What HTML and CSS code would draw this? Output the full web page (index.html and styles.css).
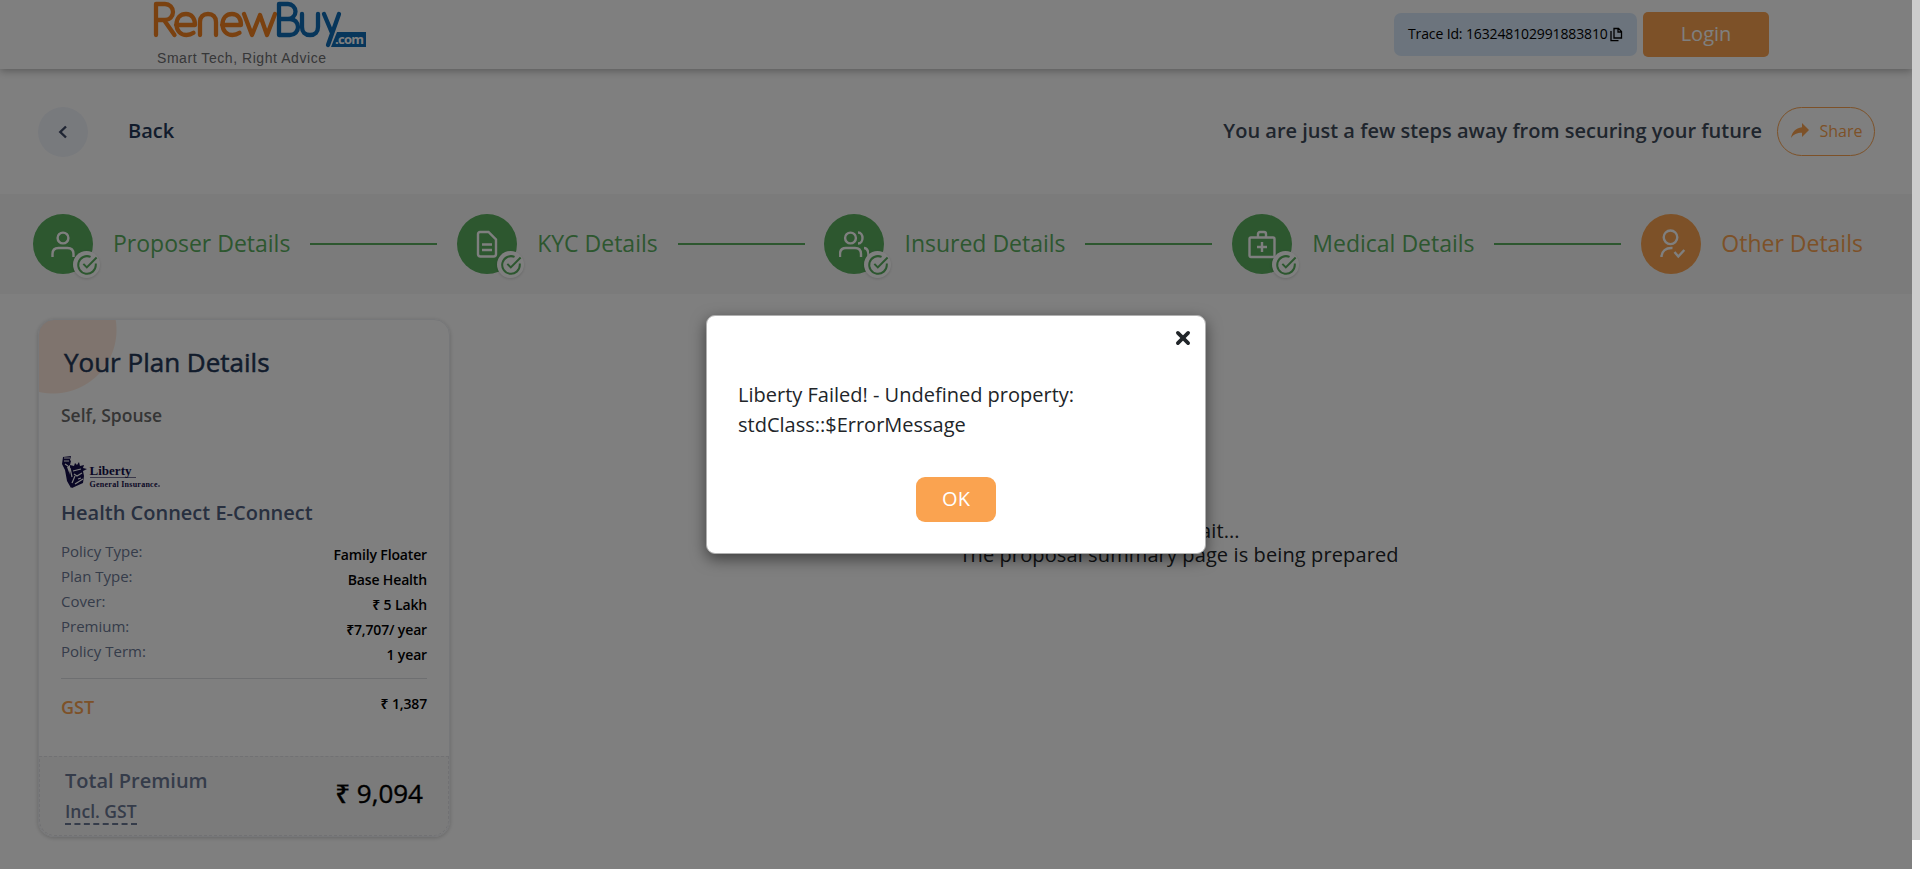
FILE: index.html
```html
<!DOCTYPE html>
<html lang="en">
<head>
<meta charset="utf-8">
<title>RenewBuy</title>
<link rel="stylesheet" href="styles.css">
</head>
<body>
<svg class="defs" aria-hidden="true">
  <symbol id="check" viewBox="0 0 24 24"><path d="M21.6 10.3v1.7A9.6 9.6 0 1 1 15.9 3.2M22.5 3.8 11.8 14.600 8 10.800" fill="none" stroke="currentColor" stroke-width="2.200"/></symbol>
</svg>
<div class="page">
  <header class="topbar">
    <div class="brand">
      <svg class="logo" viewBox="0 0 216 66" role="img" aria-label="RenewBuy.com">
        <g fill="none" stroke-width="4.300" stroke-linecap="round" stroke-linejoin="round">
          <g stroke="#f58220">
            <path d="M3 35V4h9a8 8 0 0 1 0 16H3M11 20l10.500 15"/>
            <path d="M23 25h19c0-7-3.500-11-9-11s-9.500 4-9.500 10.500S28 35 33.500 35c3 0 5-.8 7-2.200"/>
            <path d="M47 35V22c0-5 3-8 8-8s8 3 8 8v13"/>
            <path d="M69 25h19c0-7-3.500-11-9-11s-9.500 4-9.500 10.500S74 35 79.500 35c3 0 5-.8 7-2.200"/>
            <path d="M91 14l8 21 8-20 7 20 8-21"/>
          </g>
          <g stroke="#0f6cb6">
            <path d="M126 4h9a7.500 7.500 0 0 1 0 15h-9V4zM126 19h11a8 8 0 0 1 0 16h-11z"/>
            <path d="M149 14v13c0 5 3 8 8 8s8-3 8-8V14"/>
            <path d="M171 14l8 19M186 14l-11 31"/>
          </g>
        </g>
        <path d="M184 32h29v15h-35z" fill="#0f6cb6"/>
        <text x="182" y="43.500" class="logo-com" textLength="29">.com</text>
        <text x="4" y="63" class="logo-tag" textLength="169">Smart Tech, Right Advice</text>
      </svg>
    </div>
    <div class="account">
      <div class="trace"><span>Trace Id: 163248102991883810</span>
        <svg class="copy" viewBox="0 0 14 15"><path d="M5 1.500h4.500L12.500 4.500v6.500H5zM9 1.500V5h3.500M2 4v9.700h7.500" fill="none" stroke="#000" stroke-width="1.300"/></svg>
      </div>
      <button class="login">Login</button>
    </div>
  </header>
  <div class="subbar">
    <span class="back-btn"><svg viewBox="0 0 10 14"><path d="M8 1.500 2.300 7 8 12.500" fill="none" stroke="#3f4a66" stroke-width="2.400"/></svg></span>
    <span class="back">Back</span>
    <span class="slogan">You are just a few steps away from securing your future</span>
    <button class="share"><svg viewBox="0 0 18 16"><path d="M11 0l7 7-7 7V9.800C6 9.800 2.500 11.200 0 15 .8 9 4.500 5 11 4.200z" fill="currentColor"/></svg>Share</button>
  </div>
  <nav class="steps">
    <div class="step"><span class="dot"><svg viewBox="0 0 30 30"><circle cx="15" cy="9" r="5.400"/><path d="M4.500 28v-3c0-4 2.500-6 6-6h9c3.500 0 6 2 6 6v3"/></svg><i class="tick"><svg><use href="#check"/></svg></i></span><span class="label">Proposer Details</span></div>
    <span class="line"></span>
    <div class="step"><span class="dot"><svg viewBox="0 0 30 30"><path d="M8 3h8.500L24 10.500V25a2.500 2.500 0 0 1-2.500 2.500h-13A2.500 2.500 0 0 1 6 25V5a2 2 0 0 1 2-2zM10 15.500h10M10 21h10"/></svg><i class="tick"><svg><use href="#check"/></svg></i></span><span class="label">KYC Details</span></div>
    <span class="line"></span>
    <div class="step"><span class="dot"><svg viewBox="0 0 30 30"><circle cx="11.500" cy="9" r="5.400"/><path d="M1 28v-3c0-4 2.500-6 6-6h9c3.500 0 6 2 6 6v3M19 3.500c6 0 6 11 0 11M25 19c3 0 4.500 3 4.500 8"/></svg><i class="tick"><svg><use href="#check"/></svg></i></span><span class="label">Insured Details</span></div>
    <span class="line"></span>
    <div class="step"><span class="dot"><svg viewBox="0 0 30 30"><path d="M4 8.500h22a1.500 1.500 0 0 1 1.500 1.500v16.500a1.500 1.500 0 0 1-1.500 1.500H4a1.500 1.500 0 0 1-1.500-1.500V10A1.500 1.500 0 0 1 4 8.500zM11 8V5a2 2 0 0 1 2-2h4a2 2 0 0 1 2 2v3M15 13v10M10 18h10"/></svg><i class="tick"><svg><use href="#check"/></svg></i></span><span class="label">Medical Details</span></div>
    <span class="line"></span>
    <div class="step current"><span class="dot"><svg viewBox="0 0 30 30"><circle cx="14.500" cy="8.300" r="6.800"/><path d="M5.500 28c0-6 4.500-9.500 11-9M18.500 23l3.800 4.500 6-6.500"/></svg></span><span class="label">Other Details</span></div>
  </nav>
  <main class="content">
    <aside class="plan">
      <div class="plan-body">
        <h1>Your Plan Details</h1>
        <p class="members">Self, Spouse</p>
        <svg class="liberty" viewBox="0 0 102 36" role="img" aria-label="Liberty General Insurance">
          <g fill="#150f4a"><path d="M2 2l8-1-1 4 1 1-1 4-3 2 3 8 4 7v3l-3 3-4-7-2-11-3-6z"/><path d="M9 10l4 1 1-3 2 2 2-3 1 4 4-1-1 3 4 1-4 2 1 5-1 7-11 5-3-10 1-8z"/></g>
          <path d="M3 3h6M3 6h5M4 9l3 2M12 16l8-2M13 19l3 2 5-3M11 28l3-7M14 29l8-5M17 24l3-1M9 13l2 9" stroke="#fff" stroke-width="1.200" fill="none"/>
          <text x="28.500" y="20" class="lib-name" textLength="42">Liberty</text>
          <path d="M29 22.500h46" stroke="#150f4a" stroke-width=".6"/>
          <text x="28.500" y="32" class="lib-sub" textLength="68">General Insurance</text><circle cx="98" cy="31" r=".8" fill="#150f4a"/>
        </svg>
        <h2>Health Connect E-Connect</h2>
        <dl class="facts">
          <dt>Policy Type:</dt><dd>Family Floater</dd>
          <dt>Plan Type:</dt><dd>Base Health</dd>
          <dt>Cover:</dt><dd>₹ 5 Lakh</dd>
          <dt>Premium:</dt><dd>₹7,707/ year</dd>
          <dt>Policy Term:</dt><dd>1 year</dd>
        </dl>
        <div class="gst"><strong>GST</strong><span>₹ 1,387</span></div>
      </div>
      <div class="total">
        <div class="total-label"><span>Total Premium</span><span class="incl">Incl. GST</span></div>
        <span class="amount">₹ 9,094</span>
      </div>
    </aside>
    <section class="wait">Please wait...<br>The proposal summary page is being prepared</section>
  </main>
</div>
<div class="backdrop">
  <div class="modal" role="dialog">
    <button class="close" aria-label="Close"><svg viewBox="0 0 14 14"><path d="M2.500 2.500l9 9M11.500 2.500l-9 9" stroke="#212529" stroke-width="3.200" stroke-linecap="round"/></svg></button>
    <p>Liberty Failed! - Undefined property: stdClass::$ErrorMessage</p>
    <button class="ok">OK</button>
  </div>
</div>
<div class="scrollbar"><div class="thumb"></div></div>
</body>
</html>
```
FILE: styles.css
```css
* { box-sizing: border-box; }
body { margin: 0; height: 869px; overflow: hidden; font-family: "Open Sans", "Noto Sans", sans-serif; color: #212529; background: #fff; position: relative; }
h1, h2, p, dl, dd { margin: 0; }
button { font-family: inherit; border: 0; }
.defs { position: absolute; width: 0; height: 0; }
.page { width: 1912px; height: 869px; }
.topbar { height: 69px; display: flex; justify-content: space-between; padding: 0 143px 0 153px; box-shadow: 0 2px 8px rgba(0,0,0,.3); }
.logo { display: block; width: 216px; height: 66px; }
.logo-com { font: bold 13px "Open Sans", sans-serif; fill: #fff; }
.logo-tag { font: 14px "Liberation Sans", sans-serif; fill: #6d6e71; }
.account { display: flex; gap: 6px; padding-top: 12px; }
.trace { display: flex; align-items: center; width: 243px; height: 43px; margin-top: 1px; padding: 0 13px 2px 14px; border-radius: 7px; background: #d9e9fb; color: #000; font-size: 14px; letter-spacing: -.13px; white-space: nowrap; }
.copy { width: 14px; height: 15px; margin: 2px 0 0 1px; flex: none; }
.login { width: 126px; height: 45px; padding: 0 0 2px; border-radius: 5px; background: #faa350; color: #fff; font-size: 20px; }
.subbar { height: 125px; display: flex; align-items: center; padding: 0 37px 0 38px; }
.back-btn { width: 50px; height: 50px; border-radius: 50%; background: #f1f4fb; display: flex; align-items: center; justify-content: center; }
.back-btn svg { width: 10px; height: 14px; }
.back { margin-left: 40px; padding-bottom: 2px; font-size: 20px; font-weight: 600; color: #253858; }
.slogan { margin-left: auto; padding-bottom: 2px; font-size: 20px; font-weight: 600; color: #3f4b5a; }
.share { margin-left: 15px; width: 98px; height: 49px; padding: 0 0 1px 1px; border: 1px solid #faa350; border-radius: 25px; background: none; color: #faa350; font-size: 16px; display: flex; align-items: center; justify-content: center; gap: 11px; }
.share svg { width: 18px; height: 16px; }
.steps { height: 100px; display: flex; align-items: center; justify-content: space-between; padding: 0 49px 0 33px; background: #f7f7f7; }
.step { display: flex; align-items: center; gap: 20px; color: #5aae5f; }
.dot { position: relative; width: 60px; height: 60px; border-radius: 50%; background: #5aae5f; display: flex; align-items: center; justify-content: center; }
.dot > svg { width: 30px; height: 30px; fill: none; stroke: #fff; stroke-width: 2.4; }
.tick { position: absolute; left: 40px; top: 37px; width: 27px; height: 27px; border-radius: 50%; background: #fff; display: flex; align-items: center; justify-content: center; box-shadow: 0 1px 3px rgba(0,0,0,.15); }
.tick svg { width: 22px; height: 22px; }
.label { font-size: 23px; padding-bottom: 2px; }
.line { width: 127px; height: 2px; background: #5aae5f; }
.current { color: #faa350; }
.current .dot { background: #faa350; }
.content { display: flex; padding: 25px 38px; }
.plan { width: 412px; height: 518px; border: 1px solid #eceef2; border-radius: 16px; box-shadow: 0 1px 4px rgba(0,0,0,.2); overflow: hidden; background: radial-gradient(circle 64px at 14px 10px, #ffe9dc 63px, transparent 64px); display: flex; flex-direction: column; }
.plan-body { flex: 1; padding: 24px 22px 0; }
h1 { margin-left: 3px; font-size: 26px; line-height: 36px; font-weight: 500; -webkit-text-stroke: .5px #253858; color: #253858; }
.members { margin-top: 22px; font-size: 17.5px; line-height: 26px; font-weight: 600; color: #6b6b6b; }
.liberty { display: block; width: 102px; height: 36px; margin-top: 27px; }
.lib-name { font: bold 13px "Liberation Serif", serif; fill: #150f4a; }
.lib-sub { font: bold 8px "Liberation Serif", serif; fill: #150f4a; }
h2 { margin-top: 8px; font-size: 20px; line-height: 28px; font-weight: 600; color: #506080; }
.facts { display: grid; grid-template-columns: auto auto; margin-top: 12px; grid-auto-rows: 25px; height: 140px; border-bottom: 1px solid #dcdfe3; }
.facts dt { font-size: 15px; line-height: 25px; color: #6b7894; }
.facts dd { padding-top: 3px; font-size: 14px; line-height: 25px; font-weight: 600; letter-spacing: -.15px; color: #000; text-align: right; }
.gst { display: flex; justify-content: space-between; margin-top: 13px; }
.gst strong { padding-top: 2px; font-size: 18px; line-height: 26px; font-weight: 600; color: #faa350; }
.gst span { font-size: 14px; line-height: 24px; font-weight: 600; letter-spacing: -.15px; color: #000; }
.total { height: 80px; border: 1px dashed #e2e2e6; border-radius: 0 0 16px 16px; background: #f7f7f7; display: flex; justify-content: space-between; padding: 9px 25px 0; }
.total-label { display: flex; flex-direction: column; align-items: flex-start; font-size: 20px; line-height: 30px; font-weight: 600; color: #6b7894; }
.incl { margin-top: 2px; font-size: 17.5px; line-height: 27px; height: 27px; border-bottom: 2px dashed #6b7894; }
.amount { font-size: 26px; line-height: 55px; font-weight: 500; -webkit-text-stroke: .4px #000; color: #000; }
.wait { flex: 1; margin-left: 34px; padding-top: 200px; font-size: 20px; line-height: 24px; letter-spacing: .11px; text-align: center; color: #212529; }
.backdrop { position: absolute; top: 0; left: 0; width: 1912px; height: 869px; background: rgba(0,0,0,.5); }
.modal { position: absolute; left: 706px; top: 315px; width: 500px; height: 239px; border: 1px solid #b0b0b0; border-radius: 9px; background: #fff; box-shadow: 0 5px 15px rgba(0,0,0,.5); display: flex; flex-direction: column; padding: 14px 14px 0 31px; }
.close { align-self: flex-end; width: 16px; height: 16px; padding: 0; background: none; }
.close svg { display: block; width: 16px; height: 16px; }
.modal p { margin-top: 34px; width: 400px; font-size: 20px; line-height: 30px; color: #212529; }
.ok { margin: 37px 0 0 178px; width: 80px; height: 45px; padding: 0 0 2px; border-radius: 9px; background: #faa350; color: #fff; font-size: 20px; }
.scrollbar { position: absolute; top: 0; right: 0; width: 8px; height: 869px; background: #fff; }
.thumb { height: 840px; background: #ccc; }
```
